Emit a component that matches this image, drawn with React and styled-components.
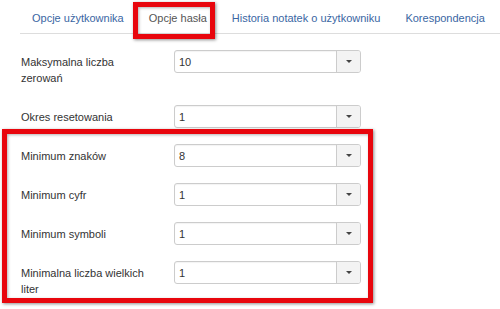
import styled, { createGlobalStyle } from "styled-components";

const GlobalStyle = createGlobalStyle`
  body {
    margin: 0;
    background: #fff;
    font-family: "Liberation Sans", Arial, sans-serif;
  }
`;

const Page = styled.div`
  position: relative;
  width: 500px;
  height: 309px;
  overflow: hidden;
  background: #fff;
  padding-left: 20px;
  box-sizing: border-box;
`;

const Tabs = styled.ul`
  display: flex;
  gap: 1px;
  margin: 0;
  padding: 0;
  list-style: none;
  border-bottom: 1px solid #dddddd;
  height: 33px;
`;

const Tab = styled.li`
  display: flex;
  align-items: center;
  padding: 3px 12px 0;
  font-size: 11px;
  white-space: nowrap;
  color: ${({ $active }) => ($active ? "#555555" : "#3a66a3")};
`;

const Form = styled.div`
  display: flex;
  flex-direction: column;
  gap: 16px;
  padding-top: 16px;
`;

const Row = styled.div`
  display: flex;
  align-items: flex-start;
`;

const Label = styled.label`
  width: 154px;
  box-sizing: border-box;
  padding: 4px 23px 3px 1px;
  font-size: 11px;
  line-height: 16px;
  color: #333333;
`;

const Select = styled.div`
  display: flex;
  width: 187px;
  height: 23px;
  box-sizing: border-box;
  border: 1px solid #cccccc;
  border-radius: 3px;
  background: #fff;
  box-shadow: inset 0 1px 1px rgba(0, 0, 0, 0.05);
`;

const Value = styled.span`
  flex: 1;
  display: flex;
  align-items: center;
  padding-left: 4px;
  font-size: 11px;
  color: #333333;
`;

const Caret = styled.span`
  width: 23px;
  display: flex;
  align-items: center;
  justify-content: center;
  border-left: 1px solid #cccccc;
  background: #f3f3f3;
  border-radius: 0 2px 2px 0;

  &::after {
    content: "";
    border-left: 3px solid transparent;
    border-right: 3px solid transparent;
    border-top: 3px solid #444444;
  }
`;

const Highlight = styled.div`
  position: absolute;
  left: ${({ $x }) => $x}px;
  top: ${({ $y }) => $y}px;
  width: ${({ $w }) => $w}px;
  height: ${({ $h }) => $h}px;
  box-sizing: border-box;
  border: 5px solid #e8060d;
  box-shadow: 1px 1px 3px rgba(0, 0, 0, 0.45), inset 1px 1px 3px rgba(0, 0, 0, 0.3);
  pointer-events: none;
`;

const tabs = [
  { name: "Opcje użytkownika" },
  { name: "Opcje hasła", active: true },
  { name: "Historia notatek o użytkowniku" },
  { name: "Korespondencja" },
];

const fields = [
  { label: "Maksymalna liczba zerowań", value: "10" },
  { label: "Okres resetowania", value: "1" },
  { label: "Minimum znaków", value: "8" },
  { label: "Minimum cyfr", value: "1" },
  { label: "Minimum symboli", value: "1" },
  { label: "Minimalna liczba wielkich liter", value: "1" },
];

export default function App() {
  return (
    <Page>
      <GlobalStyle />
      <Tabs>
        {tabs.map((t) => (
          <Tab key={t.name} $active={t.active}>{t.name}</Tab>
        ))}
      </Tabs>
      <Form>
        {fields.map((f) => (
          <Row key={f.label}>
            <Label>{f.label}</Label>
            <Select>
              <Value>{f.value}</Value>
              <Caret />
            </Select>
          </Row>
        ))}
      </Form>
      <Highlight $x={133} $y={2} $w={82} $h={37} />
      <Highlight $x={2} $y={129} $w={371} $h={174} />
    </Page>
  );
}
